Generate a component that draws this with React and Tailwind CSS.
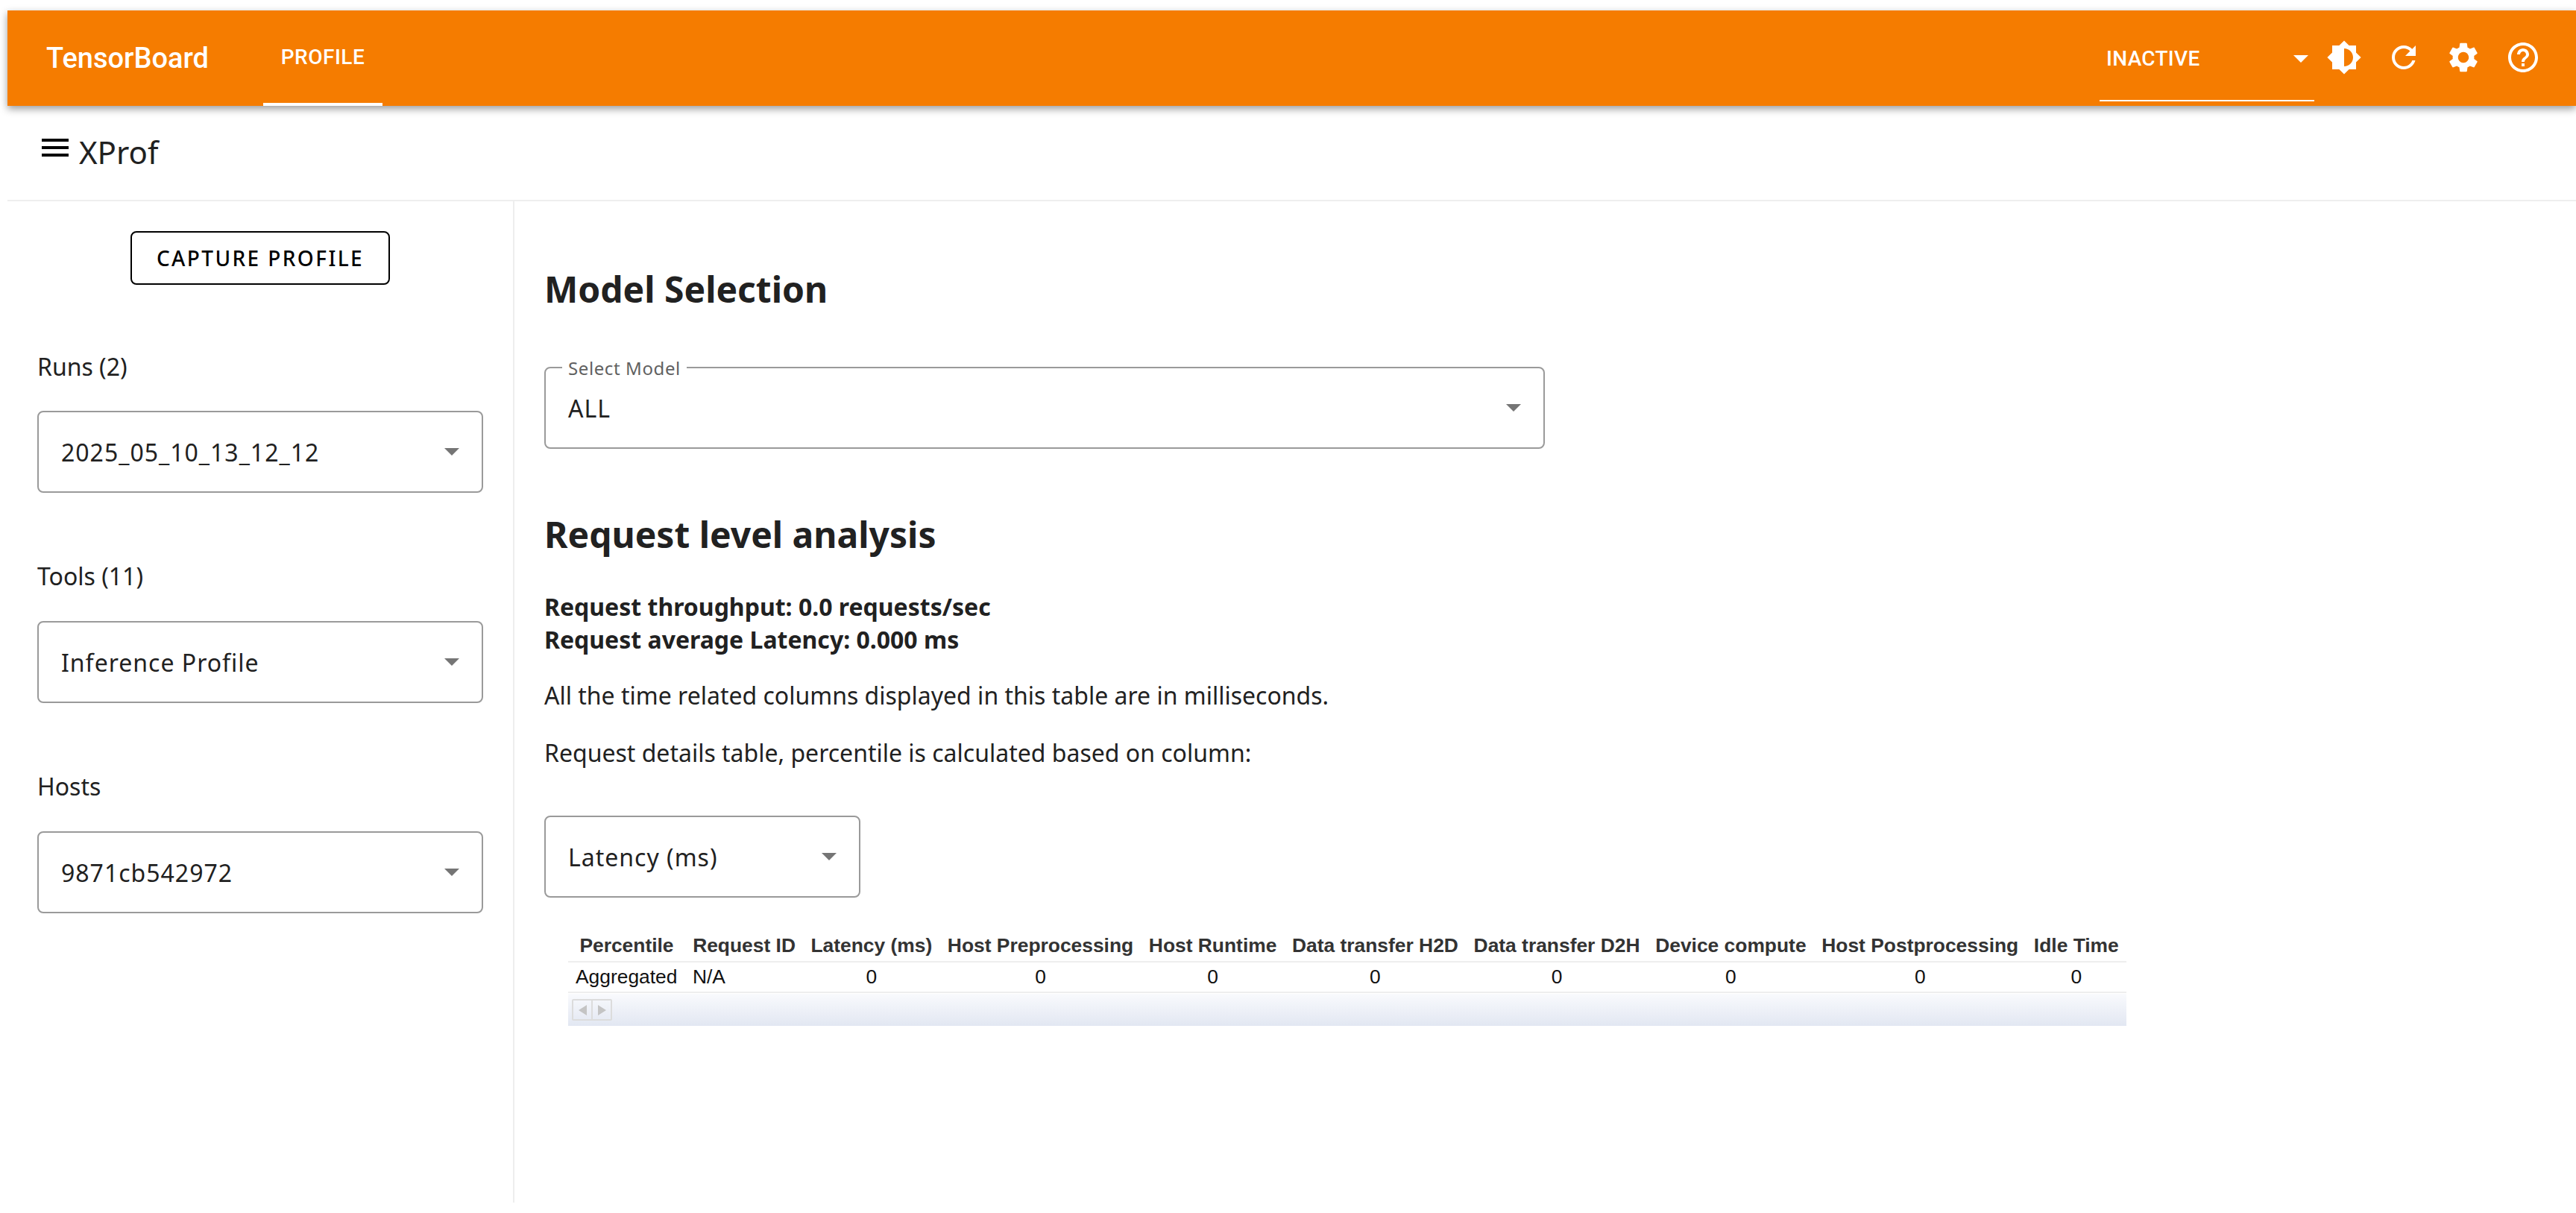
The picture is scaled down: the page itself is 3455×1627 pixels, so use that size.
const columns = [
  'Percentile',
  'Request ID',
  'Latency (ms)',
  'Host Preprocessing',
  'Host Runtime',
  'Data transfer H2D',
  'Data transfer D2H',
  'Device compute',
  'Host Postprocessing',
  'Idle Time',
]

function MatIcon({ d, className = 'w-[48px] h-[48px]' }) {
  return (
    <svg viewBox="0 0 24 24" fill="currentColor" className={className}>
      <path d={d} />
    </svg>
  )
}

function Arrow({ className }) {
  return (
    <svg viewBox="0 0 20 10" fill="currentColor" className={className}>
      <path d="M0 0h20L10 10z" />
    </svg>
  )
}

function SelectBox({ value, className = '' }) {
  return (
    <div className={`h-[110px] border-2 border-[#9a9a9a] rounded-[8px] flex items-center justify-between pl-[30px] pr-[30px] ${className}`}>
      <span className="text-[32px] leading-[44px] tracking-[1px] text-[#212121] mt-[2px]">{value}</span>
      <Arrow className="w-[20px] h-[10px] text-[#757575]" />
    </div>
  )
}

function ToolbarButton({ d }) {
  return (
    <button className="w-[80px] h-[80px] flex items-center justify-center text-white">
      <MatIcon d={d} />
    </button>
  )
}

export default function App() {
  return (
    <div className="pl-[10px] pt-[14px] h-[1627px] overflow-hidden bg-white font-['Noto_Sans',sans-serif] text-[#212121]">
      <div className="relative z-10 h-[128px] bg-[#f57c00] shadow-[0_4px_10px_rgba(0,0,0,0.4)] flex items-center pl-[52px] pr-[31px] text-white font-['Roboto',sans-serif]">
        <span className="text-[38px] font-medium leading-[48px] w-[218px] whitespace-nowrap">TensorBoard</span>
        <div className="ml-[73px] w-[160px] h-[128px] border-b-4 border-white flex items-center justify-center text-[28px] font-medium tracking-[0.5px]">
          <span className="mt-[2px]">PROFILE</span>
        </div>
        <div className="ml-auto w-[288px] h-[122px] mt-[-6px] border-b-2 border-white flex items-center justify-between pl-[9px] pr-[8px] text-[28px] font-medium tracking-[0.3px]">
          <span className="mt-[10px]">INACTIVE</span>
          <Arrow className="w-[20px] h-[10px] mt-[10px]" />
        </div>
        <div className="flex items-center -mt-[2px]">
          <ToolbarButton d="M20 15.31L23.31 12 20 8.69V4h-4.69L12 .69 8.69 4H4v4.69L.69 12 4 15.31V20h4.69L12 23.31 15.31 20H20v-4.69zM12 18V6c3.31 0 6 2.69 6 6s-2.69 6-6 6z" />
          <ToolbarButton d="M17.65 6.35C16.2 4.9 14.21 4 12 4c-4.42 0-7.99 3.58-7.99 8s3.57 8 7.99 8c3.73 0 6.84-2.55 7.73-6h-2.08c-.82 2.33-3.04 4-5.65 4-3.31 0-6-2.69-6-6s2.69-6 6-6c1.66 0 3.14.69 4.22 1.78L13 11h7V4l-2.35 2.35z" />
          <ToolbarButton d="M19.14 12.94c.04-.3.06-.61.06-.94 0-.32-.02-.64-.07-.94l2.03-1.58c.18-.14.23-.41.12-.61l-1.92-3.32c-.12-.22-.37-.29-.59-.22l-2.39.96c-.5-.38-1.03-.7-1.62-.94l-.36-2.54c-.04-.24-.24-.41-.48-.41h-3.84c-.24 0-.43.17-.47.41l-.36 2.54c-.59.24-1.13.57-1.62.94l-2.39-.96c-.22-.08-.47 0-.59.22L2.74 8.87c-.12.21-.08.47.12.61l2.03 1.58c-.05.3-.09.63-.09.94s.02.64.07.94l-2.03 1.58c-.18.14-.23.41-.12.61l1.92 3.32c.12.22.37.29.59.22l2.39-.96c.5.38 1.03.7 1.62.94l.36 2.54c.05.24.24.41.48.41h3.84c.24 0 .44-.17.47-.41l.36-2.54c.59-.24 1.13-.56 1.62-.94l2.39.96c.22.08.47 0 .59-.22l1.92-3.32c.12-.22.07-.47-.12-.61l-2.01-1.58zM12 15.6c-1.98 0-3.6-1.62-3.6-3.6s1.62-3.6 3.6-3.6 3.6 1.62 3.6 3.6-1.62 3.6-3.6 3.6z" />
          <ToolbarButton d="M11 18h2v-2h-2v2zm1-16C6.48 2 2 6.48 2 12s4.48 10 10 10 10-4.48 10-10S17.52 2 12 2zm0 18c-4.41 0-8-3.59-8-8s3.59-8 8-8 8 3.59 8 8-3.59 8-8 8zm0-14c-2.21 0-4 1.79-4 4h2c0-1.1.9-2 2-2s2 .9 2 2c0 2-3 1.75-3 5h2c0-2.25 3-2.5 3-5 0-2.21-1.79-4-4-4z" />
        </div>
      </div>

      <div className="h-[128px] border-b-2 border-[#eeeeee] flex items-center pl-[40px]">
        <div className="-mt-[14px] text-black">
          <MatIcon d="M3 18h18v-2H3v2zm0-5h18v-2H3v2zm0-7v2h18V6H3z" />
        </div>
        <span className="ml-[8px] text-[42px] leading-[48px] text-[#212121] -mt-[2px]">XProf</span>
      </div>

      <div className="flex h-[1343px]">
        <div className="w-[680px] border-r-2 border-[#eeeeee] pl-[40px] pt-[40px] shrink-0">
          <div className="w-[598px]">
            <div className="flex justify-center">
              <button className="h-[72px] w-[348px] border-2 border-black rounded-[8px] text-[28px] font-medium tracking-[2.4px] text-black">
                CAPTURE PROFILE
              </button>
            </div>
            <div className="mt-[88px] text-[32px] leading-[44px]">Runs (2)</div>
            <SelectBox value="2025_05_10_13_12_12" className="mt-[37px]" />
            <div className="mt-[90px] text-[32px] leading-[44px]">Tools (11)</div>
            <SelectBox value="Inference Profile" className="mt-[38px]" />
            <div className="mt-[90px] text-[32px] leading-[44px]">Hosts</div>
            <SelectBox value="9871cb542972" className="mt-[38px]" />
          </div>
        </div>

        <div className="pl-[40px] flex-1">
          <h2 className="mt-[86px] text-[48px] font-bold leading-[64px]">Model Selection</h2>

          <div className="relative mt-[72px] w-[1342px]">
            <SelectBox value="ALL" />
            <span className="absolute left-[24px] -top-[12px] bg-white px-[8px] text-[24px] leading-[28px] tracking-[0.6px] text-[#616161]">
              Select Model
            </span>
          </div>

          <h2 className="mt-[83px] text-[48px] font-bold leading-[64px]">Request level analysis</h2>

          <div className="mt-[43px] text-[32px] font-bold leading-[44px]">
            <div>Request throughput: 0.0 requests/sec</div>
            <div>Request average Latency: 0.000 ms</div>
          </div>
          <p className="mt-[31px] text-[32px] leading-[44px]">All the time related columns displayed in this table are in milliseconds.</p>
          <p className="mt-[33px] text-[32px] leading-[44px]">Request details table, percentile is calculated based on column:</p>

          <SelectBox value="Latency (ms)" className="mt-[62px] w-[424px]" />

          <div className="mt-[45px] ml-[32px] w-[2090px] font-['Liberation_Sans',sans-serif] text-[26.4px]">
            <table className="w-full border-collapse">
              <thead>
                <tr className="h-[40px] border-b-2 border-[#eeeeee]">
                  {columns.map(name => (
                    <th key={name} className="px-[10px] font-bold text-center text-[#333333] whitespace-nowrap">{name}</th>
                  ))}
                </tr>
              </thead>
              <tbody>
                <tr className="h-[40px] border-b-2 border-[#eeeeee] text-[#111111]">
                  <td className="px-[10px] text-left">Aggregated</td>
                  <td className="px-[10px] text-left">N/A</td>
                  {columns.slice(2).map(name => (
                    <td key={name} className="px-[10px] text-center">0</td>
                  ))}
                </tr>
              </tbody>
            </table>
            <div className="mt-[1px] h-[43px] bg-gradient-to-b from-[#f9fafd] to-[#e2e7f2] flex items-center pl-[5px]">
              <div className="h-[29px] w-[54px] flex border-2 border-[#dcdcdc] rounded-[2px]">
                <div className="flex-1 border-r-2 border-[#dcdcdc] flex items-center justify-center">
                  <svg viewBox="0 0 11 14" fill="#c4c4c4" className="w-[11px] h-[14px]"><path d="M11 0v14L0 7z" /></svg>
                </div>
                <div className="flex-1 flex items-center justify-center">
                  <svg viewBox="0 0 11 14" fill="#c4c4c4" className="w-[11px] h-[14px]"><path d="M0 0v14l11-7z" /></svg>
                </div>
              </div>
            </div>
          </div>
        </div>
      </div>
    </div>
  )
}
